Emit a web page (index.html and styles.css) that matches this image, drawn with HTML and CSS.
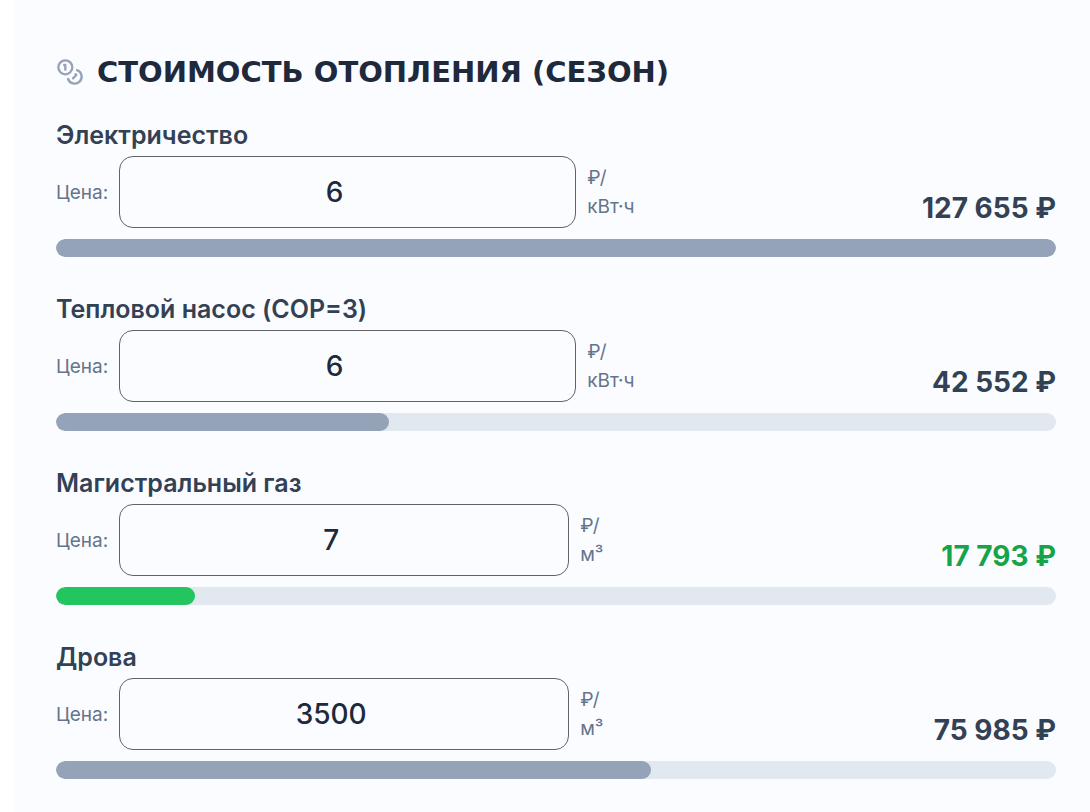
FILE: index.html
```html
<!DOCTYPE html>
<html lang="ru">
<head>
<meta charset="utf-8">
<meta name="viewport" content="width=device-width, initial-scale=1">
<title>Стоимость отопления</title>
<link rel="stylesheet" href="styles.css">
</head>
<body>
<main class="panel">
  <h2 class="heading">
    <svg class="heading-icon" viewBox="0 0 24 24" fill="none" stroke="currentColor" stroke-width="2" stroke-linecap="round" stroke-linejoin="round" aria-hidden="true"><circle cx="8" cy="8" r="6"/><path d="M18.09 10.37A6 6 0 1 1 10.34 18"/><path d="M7 6h1v4"/><path d="m16.71 13.88.7.71-2.82 2.82"/></svg>
    Стоимость отопления (сезон)
  </h2>
  <div class="fuels">
    <section class="fuel">
      <h3 class="fuel-name">Электричество</h3>
      <div class="fuel-row">
        <label class="hint" for="electric">Цена:</label>
        <input class="price price-wide" id="electric" type="number" value="6">
        <span class="hint">₽/<br>кВт·ч</span>
        <output class="cost" for="electric">127 655 ₽</output>
      </div>
      <div class="track"><div class="fill" style="width:100%"></div></div>
    </section>
    <section class="fuel">
      <h3 class="fuel-name">Тепловой насос (COP=3)</h3>
      <div class="fuel-row">
        <label class="hint" for="pump">Цена:</label>
        <input class="price price-wide" id="pump" type="number" value="6">
        <span class="hint">₽/<br>кВт·ч</span>
        <output class="cost" for="pump">42 552 ₽</output>
      </div>
      <div class="track"><div class="fill" style="width:33.3%"></div></div>
    </section>
    <section class="fuel">
      <h3 class="fuel-name">Магистральный газ</h3>
      <div class="fuel-row">
        <label class="hint" for="gas">Цена:</label>
        <input class="price" id="gas" type="number" value="7">
        <span class="hint">₽/<br>м³</span>
        <output class="cost cost-best" for="gas">17 793 ₽</output>
      </div>
      <div class="track"><div class="fill fill-best" style="width:13.9%"></div></div>
    </section>
    <section class="fuel">
      <h3 class="fuel-name">Дрова</h3>
      <div class="fuel-row">
        <label class="hint" for="wood">Цена:</label>
        <input class="price" id="wood" type="number" value="3500">
        <span class="hint">₽/<br>м³</span>
        <output class="cost" for="wood">75 985 ₽</output>
      </div>
      <div class="track"><div class="fill" style="width:59.5%"></div></div>
    </section>
  </div>
</main>
</body>
</html>
```
FILE: styles.css
```css
* { box-sizing: border-box; }
body {
  margin: 0;
  padding-left: 14px;
  background: #fff;
  color: #334155;
  font-family: Inter, "Noto Sans", sans-serif;
}
.panel {
  padding: 54px 34px 35px 42px;
  background: #fbfcff;
}
.heading {
  display: flex;
  align-items: center;
  gap: 13px;
  margin: 0 0 28px;
  color: #1e293b;
  font: 700 29px/36px "DejaVu Sans", sans-serif;
  text-transform: uppercase;
  white-space: nowrap;
}
.heading-icon {
  flex: none;
  width: 28px;
  height: 28px;
  color: #94a3b8;
}
.fuels {
  display: flex;
  flex-direction: column;
  gap: 35px;
}
.fuel-name {
  margin: 0 0 4px;
  font-size: 25px;
  font-weight: 600;
  line-height: 34px;
}
.fuel-row {
  display: flex;
  align-items: center;
  gap: 11px;
  margin-bottom: 11px;
}
.hint {
  color: #64748b;
  font-size: 19px;
  line-height: 29px;
}
.price {
  flex: none;
  width: 45%;
  height: 72px;
  padding: 0 22px 0 11px;
  border: 1px solid #626267;
  border-radius: 14px;
  background: transparent;
  color: #1e293b;
  font: 500 28px/40px Inter, sans-serif;
  text-align: center;
}
.price-wide { width: calc(45% + 7px); }
.cost {
  flex: 1;
  align-self: flex-end;
  font-size: 28px;
  font-weight: 700;
  line-height: 40px;
  text-align: right;
  white-space: nowrap;
}
.cost-best { color: #16a34a; }
.track {
  height: 18px;
  overflow: hidden;
  border-radius: 9px;
  background: #e2e8f0;
}
.fill {
  height: 100%;
  border-radius: 9px;
  background: #94a3b8;
}
.fill-best { background: #22c55e; }
```
